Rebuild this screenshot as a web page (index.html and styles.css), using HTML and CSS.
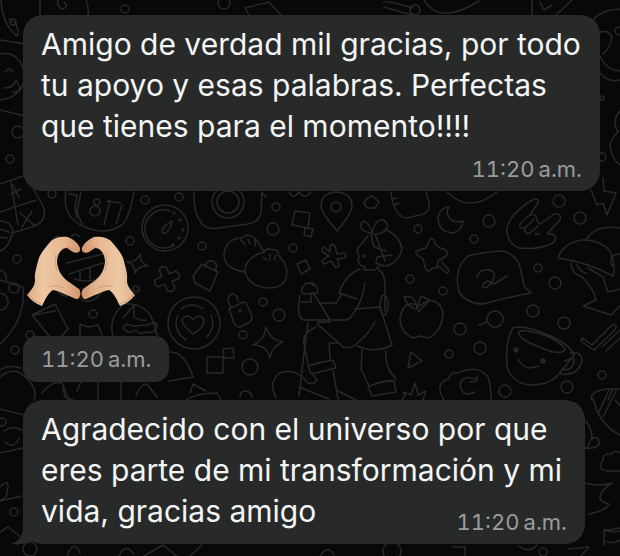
FILE: index.html
```
<!DOCTYPE html>
<html lang="es">
<head>
  <meta charset="UTF-8">
  <meta name="viewport" content="width=device-width, initial-scale=1.0">
  <title>Chat</title>
  <link rel="stylesheet" href="styles.css">
</head>
<body>
  <svg class="wallpaper" viewBox="0 0 620 556" preserveAspectRatio="xMidYMin slice" aria-hidden="true">
    <!-- top edge -->
    <path d="M1 0Q2 24 17 36q3-5-2-13l-6-4M40 0v15M58 0q-1 8 5 9 6-3 1-7M86 0q3 7 2 15M245 8l24-6 12 13M245 8l4 7M383 2q2-2 30 6M384 7l28 8M424 0q15 26 55 1M532 0v15M540 2l4 8 8-5M572 0l-16 15"/>
    <circle cx="125" cy="9" r="4"/><circle cx="224" cy="3" r="6"/><circle cx="415" cy="10" r="5"/>
    <!-- left edge -->
    <path d="M0 40l25 4M0 54q20-4 25 22q-2 21-25 24M5 72q4-6 8 0M4 88q10 0 12-8l4 8q-3 6-7 4M0 110l25 6"/>
    <circle cx="18" cy="132" r="6"/><circle cx="10" cy="159" r="4"/><circle cx="13" cy="22" r="3"/>
    <!-- right edge -->
    <path d="M593 20q8-10 27-11M600 73q8 10 20 7M600 32q9-2 12 5-1 10-9 17M600 56q6 14 20 15M620 111q-9 10-2 21-8 8-8 14 2 14 10 19"/>
    <circle cx="602" cy="98" r="2"/><circle cx="602" cy="157" r="4"/><circle cx="619" cy="31" r="4"/>
    <path d="M591 190l6 15 6-2 4 12 9-22-12-2-1-13"/>
    <!-- calculator -->
    <path d="M0 184l26-9 18 33q3 14-12 19l-20 6M0 212l36-12M11 182l7 43M11 194l10-5M13 185l6 13M20 213l14 12M32 211l-10 16M0 221q11 0 13 10-4 17-13 20M0 229l9 3M0 237l7 1"/>
    <!-- drum -->
    <path d="M66 190q-5 28 19 37 20 9 37-2 8-9 12-33M69 194l8 1-2 12 2 11M81 192l-4 20 5 12M110 201l-6 24M107 201l14 2M122 205l-6 19"/>
    <circle cx="97" cy="202" r="3"/><circle cx="95" cy="211" r="5"/>
    <!-- gauge -->
    <circle cx="165" cy="228" r="23"/><path d="M170 211a19 19 0 1 0 4 34M162 231q0-4 10-10-1 8-6 12-4 1-4-2"/>
    <g class="dots"><circle cx="174" cy="213" r="1"/><circle cx="180" cy="220" r="1"/><circle cx="183" cy="230" r="1"/><circle cx="179" cy="238" r="1"/><circle cx="173" cy="245" r="1"/></g>
    <!-- camera -->
    <path d="M194 192q-1 20 8 32 6 6 16 4l30-4q11-2 13-11l1-21M262 193l4 4"/>
    <circle cx="228" cy="202" r="16"/><circle cx="228" cy="202" r="11"/>
    <!-- behind the hands -->
    <path d="M67 263l36-9M69 274l34-11M74 279q12 4 26 0M80 270v9M90 267v12M53 240q5-7 8 0M72 236q4-4 7 1M58 292q8 8 15 0M80 298q10 9 22-6"/>
    <path d="M140 254q0 9 8 12-10-1-13 7 0-9-8-11 9 1 13-8z"/>
    <!-- plus and padlocks -->
    <path transform="rotate(-22 167 279)" d="M163 268q4-4 8 0v7h7q4 4 0 8h-7v7q-4 4-8 0v-7h-7q-4-4 0-8h7z"/>
    <path d="M193 276l9-12 16 8-8 19-15-8zM205 267q1-7 8-6 6 4 2 9M229 309l14-7q3 0 4 3l5 11q0 5-4 7l-8 4q-4 0-6-4zM231 307q-6-8 0-13 6-1 7 7"/>
    <circle cx="240" cy="311" r="1"/>
    <!-- dumplings -->
    <path d="M245 272q-22-3-21-19 3-15 18-15l4-3q9 0 13 9l5 8M241 240l4 4M248 239l2 5M255 239v7M245 272q-1-14 19-20l3-3 10 1 2 6q8 8 8 17-1 15-18 15-20-1-24-16zM263 257l4 3M270 254v6M276 255l-2 5"/>
    <!-- location and squares -->
    <path d="M337 231q-16-19-16-25 0-13 15-14 16 1 16 14 0 7-15 25z"/><circle cx="336" cy="207" r="5"/>
    <path d="M295 211l15 2-2 15-16-3zM305 228l8 1-2 8-7-2zM297 264l9-4 4 9-9 5zM289 192q4 8 10 0 6 8 12 0"/>
    <!-- star flower -->
    <path d="M330 252l-6-5q-4 3 0 6l5 3-5 3q-4 3 0 5l7-3 4 6q4 1 4-3l-2-5 7-1q4-4-1-5l-6 1-2-8q-4-4-5 1z"/>
    <path d="M367 198l6-2 6 6-4 6-8 0-3-5z"/>
    <!-- gardener -->
    <path d="M371 233q-12-2-10-9 4-8 11 8 5-16 13-11 6 6-2 11-6 4-12 1zM368 236l-8 10-3 4 2 7-1 3q1 6 7 7l-1 3 11 0 4-4M375 234l10 27M371 234l3 13 12 4M385 229q15 7 17 20-4 16-18 17l-8-3 1-6 15-2"/>
    <path d="M360 269q-15 6-21 24l18 6M378 269q8 5 7 20l0 22M365 283q-2 18-14 34-2 3-8 3M342 294l-6 9-16 0M355 309l25-2 12 38q-16 9-35 1"/>
    <path d="M314 294l16 26h-27q-6-4-4-16l1-9M302 290q1-8 10-7 8 3 5 10l-13 1q-3-1-2-4M311 294v8h-10M311 283l3 3M330 320h13M330 322l-12 0q-2 3 4 6l21 19q8 2 13-3 13-10 19-22"/>
    <path d="M308 323l-2 14-7 59M316 327q-14 6-12 17l4 20M337 343l-8 0 1 16M308 366q12-4 25-6l3 8q-12 3-25 6zM313 375l4 5q-2 5-9 3-13-16-28-10-12 8-4 25M299 387l30 12M333 371l5 28M362 350l-1 19 8 17M386 351q-2 16 10 28M368 387q14-7 26-6l2 11-24 4zM338 391l18 9"/>
    <ellipse cx="384" cy="305" rx="4" ry="10"/><g class="dots"><circle cx="364" cy="256" r="1"/></g>
    <!-- jar, bowl and moon -->
    <path d="M391 192q3 25 16 26l17-4q7-4 5-12l-3-10M392 199l5-1M394 205l5-2M447 192q22 22 50 0"/>
    <path d="M449 207q-8 0-11 10 0 15 15 16 9-2 10-12-12 3-15-6-2-4 1-8z"/>
    <!-- pushpin -->
    <path d="M430 239q5-1 5 5 4 4 11 6 3 3 0 6l-8 5-1 7q-4-1-8 3-3 0-4-4l-2-8-7-5q-1-3 3-4l7-2zM438 266l9 7q3-1 1-4l-6-7"/>
    <!-- horns sign -->
    <path d="M532 200q7-3 6 3l-8 12q7-2 7 6l3 3 14-10q8-1 6 6l-13 14h5q7 3 1 9-14 7-34 5-13-5-12-20 2-13 25-28zM530 215q-12 8-10 12 3 3 6 0l8-8M525 227q-1 8 5 6l8-7M535 234h4"/>
    <!-- speech bubble -->
    <path d="M468 256q14-4 35-5 14 4 17 16l4 19 7 7q-22 4-48 11-16 0-24-12-6-23 9-36zM477 278q2-10 13-8 7 3 3 9-2 7-8 9-6-3 3-7l6 3 13-8"/>
    <!-- mushroom -->
    <path d="M558 258q5-15 24-18 18-1 28 11 6 12 3 25-26-14-55-18zM586 240q9-16 34-12M620 254q-12 0-8 12M571 263q0 10 11 14 12 12 14 23l-13 6 28 9 9-9M577 265q4 8 9 8M588 268l15 9 5 15 12-3"/>
    <!-- apple and smiling cup -->
    <path d="M419 306q-15-8-19 12 0 14 13 20l7-2 8 2q14-6 15-25-3-14-15-12zM418 309q-10 0-14-12 11-3 13 11M417 308l4-12 9 4-12 12"/>
    <path d="M513 328q-8 13-6 39 5 16 23 18 20 0 29-11l15-19q-5-12-26-20-21-10-35-7zM519 332q7-4 30 5 16 8 16 13-5 6-23-2-25-9-23-16zM570 353q11-2 12 7-3 16-21 14M565 361l8-3q3 2-2 10-5 3-9 1M518 359q4 8 12 9l9-2"/>
    <g class="dots"><circle cx="516" cy="350" r="2"/><circle cx="543" cy="361" r="2"/></g>
    <path d="M582 338l10 7 20-20q6-1 3 5l-21 20q-4-2-13-9zM602 347l18-17M606 351l14-13"/>
    <!-- third row -->
    <path d="M0 280q13 4 23 7 3 33-23 57M0 270q8 3 6 12M0 293q9 2 8 11-2 6-8 6M32 315l23-11 13 25-13 14zM34 315l21-4M80 335l0-11 8 3q5-1 10-2l4 10M113 337q-5-21 11-33 13-2 24 8 6 8 9 23M123 318q6-7 11-13l0 12q6 4 12 3M123 328q3-6 10-2l14-1q11-5 10 2-3 7-10 5-8 4-11-2-7 5-13-2"/>
    <circle cx="14" cy="288" r="5"/>
    <circle cx="194" cy="323" r="26"/><path d="M193 334q-15-12-9-17 6-3 9 3 7-8 11 0 1 7-11 14zM178 315a19 19 0 0 0 8 25M181 309q11-8 22 0M211 315q5 12-4 22"/>
    <path d="M266 327q4 13 17 15-11 4-13 16-3-13-17-13 12-5 13-18zM207 357l16 0 0 16-16 0zM223 349l10-1 1 10-10 0z"/>
    <path d="M411 352l11 9-14 7zM444 400q-10-16 4-21 4-8 10-6 20-9 30 4 3 9 3 23M475 379q-13-4-15 6 2 13 15 7M470 382l7-1v-5"/>
    <!-- above the last message -->
    <path d="M0 370q8-6 21-2M0 377q15-13 28 3 10 10 6 20M42 393q10-13 20-10l7 17M63 387l2 10 8 3M81 382l-4 9M98 381l0 19M121 381l0 19M136 396q4-12 11-12l10 13M170 352q15 0 23 25l-24 4M190 393l3-9 13 7M186 400q10-7 31-7l4 7M240 397q0-6 6-6 6 1 6 6M402 400l3-5-2-3 8 3 4-12 3 12 8-4-3 9M592 400q-4-8 15-11h13M613 388l-5 12"/>
    <!-- sides of the last message -->
    <path d="M0 409l24 6M0 453l23-5M4 431q8-6 18-1M5 442q8 8 14-3M0 487q12-12 6 10l-6 4M0 501l22-5M0 532l8-5 13 10M593 398q6 27 27 37M599 412l10-22M603 417l13-26M615 400l5 6M586 421q6 8 6 18M587 448l4-9q9-4 8 5-3 5-14 4M608 471q-12-1-5-11-1-7 9-6 2-5 8-1M608 471h12M585 483q15 4 27 0-13 8-12 16 3 4 9 5-2 6-20 10M604 545l0-14 16-3M604 529q6 4 16 2M606 541q6 4 14-1"/>
    <!-- bottom edge -->
    <path d="M67 556q7-18 13-3M119 556q6-14 15-2M144 556l19-11 14 11M190 556l12-11M453 547h12v9M568 549l21-2-8 9M320 556q8-12 14-1M519 546q10 8 18-1"/>
    <circle cx="30" cy="549" r="7"/><circle cx="392" cy="551" r="9"/><circle cx="543" cy="552" r="4"/>
    <!-- loose bubbles -->
    <circle cx="52" cy="194" r="4"/><circle cx="145" cy="200" r="4"/><circle cx="179" cy="197" r="4"/><circle cx="130" cy="241" r="4"/><circle cx="202" cy="246" r="4"/><circle cx="17" cy="259" r="4"/><circle cx="136" cy="289" r="3"/><circle cx="93" cy="314" r="4"/><circle cx="30" cy="335" r="4"/><circle cx="15" cy="350" r="4"/>
    <circle cx="276" cy="207" r="4"/><circle cx="273" cy="229" r="6"/><circle cx="293" cy="248" r="4"/><circle cx="263" cy="302" r="4"/><circle cx="279" cy="315" r="6"/><circle cx="243" cy="335" r="4"/><circle cx="250" cy="367" r="8"/>
    <circle cx="418" cy="229" r="4"/><circle cx="489" cy="221" r="6"/><circle cx="474" cy="239" r="4"/><circle cx="559" cy="201" r="6"/><circle cx="580" cy="218" r="6"/><circle cx="538" cy="268" r="4"/><circle cx="555" cy="283" r="6"/><circle cx="410" cy="279" r="4"/><circle cx="443" cy="291" r="4"/><circle cx="460" cy="329" r="6"/><circle cx="495" cy="319" r="8"/><path d="M479 325l8-3"/><circle cx="533" cy="311" r="6"/><circle cx="564" cy="323" r="6"/><circle cx="480" cy="348" r="6"/><circle cx="449" cy="354" r="4"/><circle cx="505" cy="391" r="6"/><circle cx="567" cy="387" r="6"/><circle cx="602" cy="375" r="4"/><circle cx="14" cy="512" r="4"/><circle cx="2" cy="422" r="4"/>
  </svg>

  <main class="chat">
    <article class="bubble">
      <p class="text">Amigo de verdad mil gracias, por todo tu apoyo y esas palabras. Perfectas que tienes para el momento!!!!</p>
      <time class="time time-below" datetime="11:20">11:20&#8201;a.m.</time>
    </article>

    <article class="sticker-message">
      <svg class="sticker" viewBox="0 0 110 74" role="img" aria-label="Manos formando un corazón">
        <defs>
          <linearGradient id="skin" x1="0" y1="0" x2="1" y2="0">
            <stop offset="0" stop-color="#dfae88"/>
            <stop offset=".3" stop-color="#edc8a4"/>
            <stop offset=".7" stop-color="#e6b68f"/>
            <stop offset="1" stop-color="#d09470"/>
          </linearGradient>
          <g id="hand">
            <path fill="url(#skin)" d="M1 60C6 54 9 51 9 45C8 39 11 31 12 26C14 18 20 12 25 6C29 2 37 1 42 2C47 4 53 9 54 13C55 17 51 19 47 17L41 13C35 13 31 20 31 27C32 37 37 43 43 47L53 54C56 58 54 65 50 64C42 61 36 57 27 55C22 58 19 65 16 71Q7 68 1 60Z"/>
            <path class="crease" d="M39 12Q44 12 48 16M30 19Q28 28 31 36M23 52Q30 49 38 53M2 59Q8 67 16 69"/>
          </g>
        </defs>
        <use href="#hand"/>
        <use href="#hand" transform="translate(110 0) scale(-1 1)"/>
      </svg>
      <time class="time time-pill" datetime="11:20">11:20&#8201;a.m.</time>
    </article>

    <article class="bubble bubble-last">
      <p class="text">Agradecido con el universo por que eres parte de mi transformación y mi vida, gracias amigo <time class="time time-inline" datetime="11:20">11:20&#8201;a.m.</time></p>
      <svg class="tail" viewBox="0 0 24 24" aria-hidden="true"><path d="M12 0V8Q11 18 0 22Q14 24 24 17V0Z"/></svg>
    </article>
  </main>
</body>
</html>
```
FILE: styles.css
```
* {
  box-sizing: border-box;
}
body {
  margin: 0;
  min-height: 100vh;
  position: relative;
  overflow-x: hidden;
  background: #080808;
  color: #f4f5f5;
  font-family: Inter, "Liberation Sans", sans-serif;
}
.wallpaper {
  position: absolute;
  inset: 0;
  width: 100%;
  height: 100%;
  fill: none;
  stroke: #272828;
  stroke-width: 1.5;
  stroke-linecap: round;
  stroke-linejoin: round;
}
.wallpaper .dots {
  fill: #272828;
}
.chat {
  position: relative;
  display: flex;
  flex-direction: column;
  padding: 15px 20px 11px 23px;
}
.bubble {
  position: relative;
  display: flex;
  flex-direction: column;
  padding: 9px 18px 8px;
  border-radius: 20px;
  background: #282a2a;
}
.text {
  display: flow-root;
  margin: 0;
  font-size: 30px;
  line-height: 41px;
}
.time {
  color: #9a9c9c;
  font-size: 22px;
  line-height: 28px;
  font-variant-numeric: tabular-nums;
}
.time-below {
  align-self: flex-end;
  margin-top: 8px;
}
.time-inline {
  float: right;
  margin-top: 17px;
}
.time-pill {
  margin-top: 27px;
  padding: 9px 18px;
  border-radius: 14px;
  background: #282a2a;
}
.sticker-message {
  display: flex;
  flex-direction: column;
  align-items: flex-start;
  padding-top: 44px;
}
.sticker {
  width: 110px;
  height: 74px;
  margin-left: 3px;
}
.crease {
  fill: none;
  stroke: #c08860;
  stroke-width: 1;
  opacity: .6;
}
.bubble-last {
  margin: 18px 15px 0 0;
}
.tail {
  position: absolute;
  left: -12px;
  bottom: -2px;
  width: 24px;
  height: 24px;
  fill: #282a2a;
}
```
